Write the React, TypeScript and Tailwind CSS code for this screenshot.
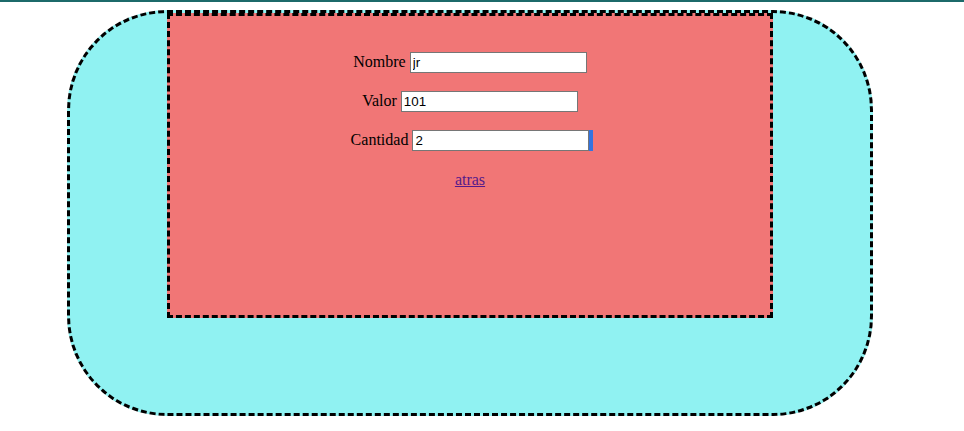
import React from "react";

export default function App() {
  return (
    <div className="w-[964px] h-[431px] bg-white overflow-hidden" style={{ fontFamily: '"Liberation Serif", serif' }}>
      <div className="h-[2px] bg-[#1c6a6a]" />
      <div className="pt-[8px]">
        <div className="ml-[67px] w-[806px] h-[406px] border-[3px] border-dashed border-black rounded-[100px] bg-[#90f2f2]">
          <div className="mx-auto w-[606px] h-[305px] border-[3px] border-dashed border-black bg-[#f17676] flex flex-col items-center pt-[34px] text-[16px] text-black">
            <div className="flex flex-col items-center gap-[15px]">
              <div className="flex items-baseline gap-[4px]">
                <span>Nombre</span>
                <input
                  readOnly
                  value="jr"
                  className="w-[177px] h-[21px] border border-[#767676] bg-white px-[2px] text-[13.33px] text-black outline-none"
                  style={{ fontFamily: '"Liberation Sans", Arial, sans-serif' }}
                />
              </div>
              <div className="flex items-baseline gap-[4px]">
                <span>Valor</span>
                <input
                  readOnly
                  value="101"
                  className="w-[177px] h-[21px] border border-[#767676] bg-white px-[2px] text-[13.33px] text-black outline-none"
                  style={{ fontFamily: '"Liberation Sans", Arial, sans-serif' }}
                />
              </div>
              <div className="flex items-baseline gap-[4px]">
                <span>Cantidad</span>
                <div className="relative flex">
                  <input
                    readOnly
                    value="2"
                    className="w-[177px] h-[21px] border border-[#767676] bg-white px-[2px] text-[13.33px] text-black outline-none"
                    style={{ fontFamily: '"Liberation Sans", Arial, sans-serif' }}
                  />
                  <div className="absolute top-0 right-[-4px] w-[4px] h-[21px] bg-[#3373e0]" />
                </div>
              </div>
            </div>
            <a href="#" className="mt-[19px] leading-[18px] text-[#551a8b] underline">
              atras
            </a>
          </div>
        </div>
      </div>
    </div>
  );
}
